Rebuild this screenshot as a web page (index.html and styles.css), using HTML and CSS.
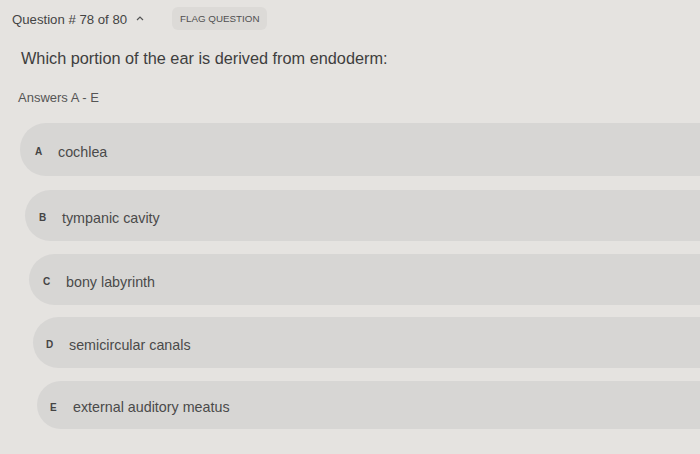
FILE: index.html
```html
<!DOCTYPE html>
<html lang="en">
<head>
    <meta charset="UTF-8">
    <meta name="viewport" content="width=device-width, initial-scale=1.0">
    <title>Question 78</title>
    <link rel="stylesheet" href="styles.css">
</head>
<body>
    <header class="quiz-header">
        <div class="question-count">
            Question # 78 of 80
            <svg class="caret" width="8" height="6" viewBox="0 0 8 6"><path d="M1 5 L4 2 L7 5" fill="none" stroke="#555" stroke-width="1.2"/></svg>
        </div>
        <button type="button" class="flag-btn">FLAG QUESTION</button>
    </header>

    <div class="question-text">Which portion of the ear is derived from endoderm:</div>
    <div class="answers-label">Answers A - E</div>

    <div class="answers">
        <div class="answer answer-a"><span class="letter">A</span><span class="text">cochlea</span></div>
        <div class="answer answer-b"><span class="letter">B</span><span class="text">tympanic cavity</span></div>
        <div class="answer answer-c"><span class="letter">C</span><span class="text">bony labyrinth</span></div>
        <div class="answer answer-d"><span class="letter">D</span><span class="text">semicircular canals</span></div>
        <div class="answer answer-e"><span class="letter">E</span><span class="text">external auditory meatus</span></div>
    </div>
</body>
</html>
```
FILE: styles.css
```css
body {
    margin: 0;
    padding: 0;
    background-color: #e5e3e0;
    font-family: "Liberation Sans", Arial, sans-serif;
    color: #4a4a4a;
    overflow: hidden;
}

.quiz-header {
    display: flex;
    align-items: center;
    height: 24px;
    padding: 7px 0 0 12px;
}

.question-count {
    font-size: 13.2px;
    color: #444;
    width: 160px;
    display: flex;
    align-items: center;
}

.caret {
    margin-left: 9px;
    margin-top: -2px;
}

.flag-btn {
    font-family: inherit;
    font-size: 9.8px;
    color: #505050;
    background-color: #dcdad7;
    border: none;
    border-radius: 6px;
    padding: 6px 8px;
    margin-top: -2px;
}

.question-text {
    font-size: 16.3px;
    color: #3e3e3e;
    padding: 18px 0 0 21px;
}

.answers-label {
    font-size: 13px;
    color: #555;
    padding: 22px 0 0 18px;
}

.answers {
    padding-top: 18px;
}

.answer {
    display: flex;
    align-items: center;
    box-sizing: border-box;
    height: 51px;
    padding-top: 4px;
    margin-bottom: 14px;
    background-color: #d7d6d4;
    border-radius: 26px 0 0 26px;
}

.answer .letter {
    font-size: 10px;
    font-weight: bold;
    color: #444;
    width: 23px;
}

.answer .text {
    font-size: 14.3px;
    color: #4a4a4a;
}

.answer-a { margin-left: 20px; height: 53px; padding-left: 15px; }
.answer-b { margin-left: 25px; padding-left: 14px; margin-bottom: 13px; }
.answer-c { margin-left: 29px; padding-left: 14px; margin-bottom: 12px; }
.answer-d { margin-left: 33px; padding-left: 13px; margin-bottom: 13px; }
.answer-e { margin-left: 37px; padding-left: 13px; height: 48px; }
```
